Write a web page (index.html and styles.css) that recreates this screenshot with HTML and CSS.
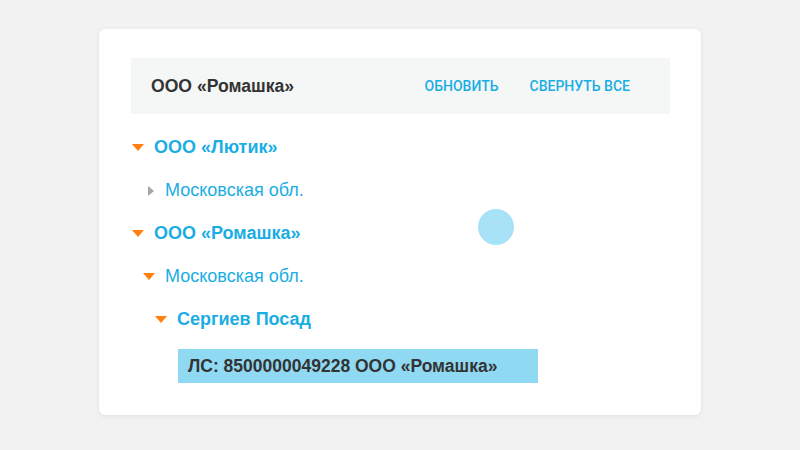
FILE: index.html
```html
<!DOCTYPE html>
<html lang="ru">
<head>
<meta charset="utf-8">
<link rel="stylesheet" href="styles.css">
</head>
<body>
<div class="card">
  <div class="header">
    <div class="title">ООО «Ромашка»</div>
    <div class="actions">
      <span class="action">Обновить</span>
      <span class="action">Свернуть все</span>
    </div>
  </div>
  <div class="tree">
    <div class="row lvl1 bold"><span class="arrow down"></span><span class="label">ООО «Лютик»</span></div>
    <div class="row lvl2"><span class="arrow right"></span><span class="label">Московская обл.</span></div>
    <div class="row lvl1 bold"><span class="arrow down"></span><span class="label">ООО «Ромашка»</span></div>
    <div class="row lvl2"><span class="arrow down"></span><span class="label">Московская обл.</span></div>
    <div class="row lvl3 bold"><span class="arrow down"></span><span class="label">Сергиев Посад</span></div>
    <div class="leaf">ЛС: 8500000049228 ООО «Ромашка»</div>
  </div>
  <div class="ripple"></div>
</div>
</body>
</html>
```
FILE: styles.css
```css
* { box-sizing: border-box; }
html, body { margin: 0; padding: 0; }
body {
  width: 800px;
  height: 450px;
  background: #f2f2f2;
  font-family: "Liberation Sans", Arial, sans-serif;
  padding: 29px 0 0 99px;
}
.card {
  position: relative;
  width: 602px;
  background: #fff;
  border-radius: 6px;
  box-shadow: 0 1px 4px rgba(0,0,0,0.08);
  padding: 29px 31px 32px 32px;
}
.header {
  height: 56px;
  background: #f5f7f7;
  display: flex;
  align-items: center;
  justify-content: space-between;
  padding: 0 40px 0 20px;
}
.title {
  font-weight: bold;
  font-size: 17.6px;
  color: #333;
}
.actions {
  display: flex;
  gap: 31px;
}
.action {
  font-family: Roboto, "Liberation Sans", sans-serif;
  font-weight: 500;
  font-size: 14px;
  text-transform: uppercase;
  color: #1aade4;
}
.tree {
  margin-top: 12px;
  display: flex;
  flex-direction: column;
}
.row {
  height: 43px;
  display: flex;
  align-items: center;
  gap: 10px;
  font-size: 18px;
  color: #1aade4;
}
.row.bold { font-weight: bold; }
.lvl1 { padding-left: 1px; }
.lvl2 { padding-left: 12px; }
.lvl3 { padding-left: 24px; }
.arrow {
  width: 12px;
  height: 12px;
  display: flex;
  align-items: center;
  justify-content: center;
}
.arrow.down::before {
  content: "";
  border-left: 6px solid transparent;
  border-right: 6px solid transparent;
  border-top: 7px solid #ff7f0f;
}
.arrow.right::before {
  content: "";
  margin-left: 4px;
  border-top: 5px solid transparent;
  border-bottom: 5px solid transparent;
  border-left: 6px solid #a6a6a6;
}
.leaf {
  margin: 8px 0 0 47px;
  width: 360px;
  height: 34px;
  background: #8fd9f3;
  display: flex;
  align-items: center;
  padding-left: 10px;
  font-size: 17.5px;
  font-weight: bold;
  color: #333;
}
.ripple {
  position: absolute;
  left: 379px;
  top: 180px;
  width: 36px;
  height: 36px;
  border-radius: 50%;
  background: #a8e2f7;
}
```
